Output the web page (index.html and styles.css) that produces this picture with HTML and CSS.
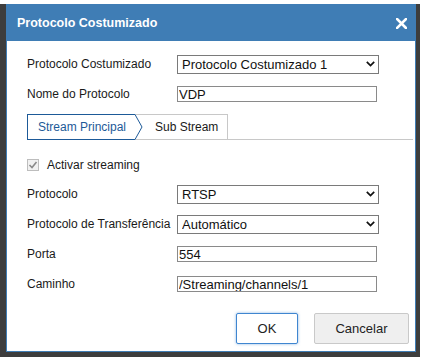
FILE: index.html
```html
<!DOCTYPE html>
<html lang="pt">
<head>
    <meta charset="UTF-8">
    <meta name="viewport" content="width=device-width, initial-scale=1.0">
    <title>Protocolo Costumizado</title>
    <link rel="stylesheet" href="styles.css">
</head>
<body>
    <div class="frame">
        <div class="dialog">
            <div class="dialog-head">
                <span class="dialog-title">Protocolo Costumizado</span>
                <svg class="close-icon" width="11" height="11" viewBox="0 0 11 11">
                    <path d="M1 1 L10 10 M10 1 L1 10" stroke="#fff" stroke-width="2.6" stroke-linecap="square"/>
                </svg>
            </div>

            <div class="dialog-body">
                <div class="row">
                    <label class="row-label">Protocolo Costumizado</label>
                    <div class="select-wrap">
                        <select class="field-select"><option>Protocolo Costumizado 1</option></select>
                        <svg class="chevron" width="9" height="6" viewBox="0 0 9 6"><path d="M0.8 0.8 L4.5 4.6 L8.2 0.8" fill="none" stroke="#111" stroke-width="1.7"/></svg>
                    </div>
                </div>
                <div class="row">
                    <label class="row-label">Nome do Protocolo</label>
                    <input type="text" class="field-input" value="VDP">
                </div>

                <div class="tabs">
                    <div class="tab tab-active">Stream Principal</div>
                    <svg class="tab-arrow" width="8" height="26" viewBox="0 0 8 26">
                        <path d="M0 0.5 H8 M0 25.5 H8" stroke="#c8c8c8" stroke-width="1"/>
                        <path d="M0 0.5 L7 13 L0 25.5" fill="none" stroke="#1d5a98" stroke-width="1"/>
                    </svg>
                    <div class="tab tab-sub">Sub Stream</div>
                    <div class="tab-rest"></div>
                </div>

                <div class="row check-row">
                    <span class="checkbox">
                        <svg width="10" height="10" viewBox="0 0 10 10"><path d="M1.5 5 L4 7.5 L8.5 2" fill="none" stroke="#8a8a8a" stroke-width="1.6"/></svg>
                    </span>
                    <span class="check-label">Activar streaming</span>
                </div>
                <div class="row">
                    <label class="row-label">Protocolo</label>
                    <div class="select-wrap">
                        <select class="field-select"><option>RTSP</option></select>
                        <svg class="chevron" width="9" height="6" viewBox="0 0 9 6"><path d="M0.8 0.8 L4.5 4.6 L8.2 0.8" fill="none" stroke="#111" stroke-width="1.7"/></svg>
                    </div>
                </div>
                <div class="row">
                    <label class="row-label">Protocolo de Transferência</label>
                    <div class="select-wrap">
                        <select class="field-select"><option>Automático</option></select>
                        <svg class="chevron" width="9" height="6" viewBox="0 0 9 6"><path d="M0.8 0.8 L4.5 4.6 L8.2 0.8" fill="none" stroke="#111" stroke-width="1.7"/></svg>
                    </div>
                </div>
                <div class="row">
                    <label class="row-label">Porta</label>
                    <input type="text" class="field-input" value="554">
                </div>
                <div class="row">
                    <label class="row-label">Caminho</label>
                    <input type="text" class="field-input" value="/Streaming/channels/1">
                </div>
            </div>

            <div class="dialog-foot">
                <button class="btn btn-ok">OK</button>
                <button class="btn btn-cancel">Cancelar</button>
            </div>
        </div>
    </div>
</body>
</html>
```

FILE: styles.css
```css
body {
    margin: 0;
    background: #ffffff;
    font-family: 'Liberation Sans', Arial, sans-serif;
    font-size: 12px;
    color: #1a1a1a;
}

.frame {
    margin-top: 4px;
    width: 420px;
    box-sizing: border-box;
    padding: 0 4px 5px 6px;
    background: #3d3d3d;
}

.dialog {
    border: 1px solid #3f7db5;
    background: #ffffff;
}

.dialog-head {
    height: 36px;
    margin-top: -1px;
    padding-top: 1px;
    background: #3f7db5;
    display: flex;
    align-items: center;
    justify-content: space-between;
    padding-left: 10px;
    padding-right: 8px;
}

.dialog-title {
    color: #ffffff;
    font-weight: bold;
    font-size: 12.5px;
}

.close-icon {
    display: block;
}

.dialog-body {
    padding: 8px 2px 0 20px;
}

.row {
    display: flex;
    align-items: center;
    height: 30px;
}

.row-label {
    width: 150px;
    flex: none;
}

.select-wrap {
    position: relative;
    width: 202px;
    height: 19px;
}

.field-select {
    appearance: none;
    -webkit-appearance: none;
    width: 100%;
    height: 100%;
    margin: 0;
    padding: 0 0 0 4px;
    border: 1px solid #7a7a7a;
    border-radius: 0;
    background: #ffffff;
    font-family: 'Liberation Sans', Arial, sans-serif;
    font-size: 13px;
    color: #111;
}

.chevron {
    position: absolute;
    right: 4px;
    top: 6px;
}

.field-input {
    width: 200px;
    height: 16px;
    box-sizing: border-box;
    margin: 0;
    padding: 0 1px;
    border: 1px solid #8a8a8a;
    font-family: 'Liberation Sans', Arial, sans-serif;
    font-size: 13px;
    color: #111;
}

/* tabs */
.tabs {
    display: flex;
    height: 26px;
    margin-top: 5px;
}

.tab {
    box-sizing: border-box;
    height: 26px;
    display: flex;
    align-items: center;
}

.tab-active {
    width: 108px;
    padding-left: 10px;
    border: 1px solid #1d5a98;
    border-right: none;
    color: #1d5a98;
}

.tab-arrow {
    display: block;
    flex: none;
}

.tab-sub {
    width: 85px;
    padding-left: 12px;
    border: 1px solid #c8c8c8;
    border-left: none;
}

.tab-rest {
    flex: 1;
    border-bottom: 1px solid #c8c8c8;
}

.check-row {
    margin-top: 10px;
    height: 29px;
}

.checkbox {
    width: 12px;
    height: 12px;
    box-sizing: border-box;
    border: 1px solid #bdbdbd;
    background: #f1f1f1;
    display: flex;
    align-items: center;
    justify-content: center;
    margin-right: 8px;
}

.checkbox svg {
    display: block;
}

/* buttons */
.dialog-foot {
    display: flex;
    justify-content: flex-end;
    gap: 16px;
    padding: 14px 6px 7px 0;
}

.btn {
    height: 31px;
    box-sizing: border-box;
    font-family: 'Liberation Sans', Arial, sans-serif;
    font-size: 13px;
    color: #222;
    border-radius: 2px;
    cursor: pointer;
}

.btn-ok {
    width: 62px;
    background: #ffffff;
    border: 1px solid #3f86d0;
    box-shadow: 0 0 3px rgba(63, 134, 208, 0.6);
}

.btn-cancel {
    width: 95px;
    background: #efefef;
    border: 1px solid #c9c9c9;
}
```
